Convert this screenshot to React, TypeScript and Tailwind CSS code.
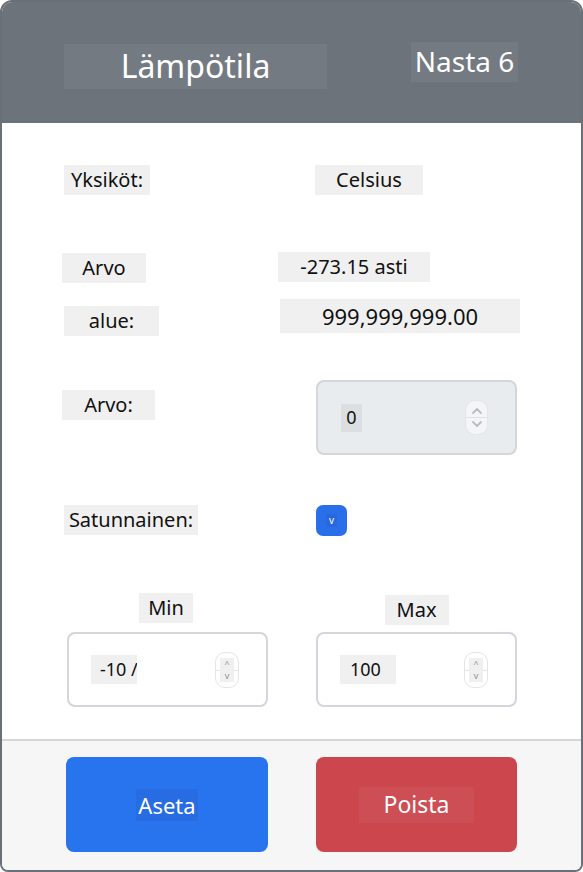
import React from "react";

const font = { fontFamily: '"Noto Sans", "Open Sans", sans-serif' };

function Spinner({ big }: { big?: boolean }) {
  if (big) {
    return (
      <div className="flex h-[35px] w-[23px] flex-col items-center justify-center rounded-[10px] border border-[#e3e5e8] bg-[#f4f5f6]">
        <svg width="14" height="10" viewBox="0 0 14 10" className="mb-[1px]">
          <path d="M3 7 L7 3 L11 7" stroke="#b9bdc2" strokeWidth="1.8" fill="none" strokeLinecap="round" strokeLinejoin="round" />
        </svg>
        <div className="h-px w-full bg-[#dfe1e4]" />
        <svg width="14" height="10" viewBox="0 0 14 10" className="mt-[1px]">
          <path d="M3 3 L7 7 L11 3" stroke="#b9bdc2" strokeWidth="1.8" fill="none" strokeLinecap="round" strokeLinejoin="round" />
        </svg>
      </div>
    );
  }
  return (
    <div className="relative flex h-[36px] w-[24px] flex-col items-center justify-center rounded-[10px] border border-[#e3e5e8] bg-white">
      <div className="absolute left-[-1px] right-[-1px] top-[17px] h-px bg-[#e3e5e8]" />
      <div className="relative flex w-[14px] flex-col items-center bg-[#f0f0f0] text-[9px] text-[#8a8f95]">
        <span className="block h-[12px] leading-[12px]">^</span>
        <span className="block h-[12px] leading-[12px]">v</span>
      </div>
    </div>
  );
}

function Label({ children, w, className = "" }: { children: React.ReactNode; w: string; className?: string }) {
  return (
    <div className={`flex h-[30px] items-center justify-center bg-[#f0f0f0] text-[20px] text-[#111] ${w} ${className}`}>
      {children}
    </div>
  );
}

export default function App() {
  return (
    <div style={font} className="h-[872px] w-[583px] bg-white">
      <div className="flex h-[872px] w-[583px] flex-col overflow-hidden rounded-t-[12px] rounded-b-[8px] border-2 border-[#6a7078]">
        {/* Header */}
        <div className="flex h-[121px] shrink-0 items-start bg-[#6c737b]">
          <div className="ml-[62px] mt-[42px] flex h-[45px] w-[263px] items-center justify-center bg-[#737a82] text-[32px] leading-none text-white">
            <span className="mt-[-2px]">Lämpötila</span>
          </div>
          <div className="ml-[84px] mt-[40px] flex h-[40px] w-[107px] items-center justify-center bg-[#737a82] text-[28px] leading-none text-white">
            <span className="mt-[-2px]">Nasta 6</span>
          </div>
        </div>

        {/* Body */}
        <div className="flex flex-1 flex-col pl-[62px]">
          {/* Row 1 */}
          <div className="mt-[42px] flex h-[30px] items-start">
            <div className="w-[251px]">
              <Label w="w-[86px]">Yksiköt:</Label>
            </div>
            <Label w="w-[108px]">Celsius</Label>
          </div>

          {/* Row 2 */}
          <div className="mt-[57px] flex h-[31px] items-start">
            <div className="w-[214px]">
              <Label w="w-[84px]" className="mt-[1px] -ml-[2px]">Arvo</Label>
            </div>
            <Label w="w-[152px]">-273.15 asti</Label>
          </div>

          {/* Row 3 */}
          <div className="mt-[16px] flex h-[37px] items-start">
            <div className="w-[216px]">
              <Label w="w-[95px]" className="mt-[7px]">alue:</Label>
            </div>
            <div className="flex h-[34px] w-[240px] items-center justify-center bg-[#f0f0f0] text-[22px] text-[#111]">
              999,999,999.00
            </div>
          </div>

          {/* Row 4 */}
          <div className="mt-[44px] flex h-[75px] items-start">
            <div className="w-[252px]">
              <Label w="w-[93px]" className="mt-[10px] -ml-[2px]">Arvo:</Label>
            </div>
            <div className="flex h-[75px] w-[201px] items-center rounded-[8px] border-2 border-[#d3d6da] bg-[#e9ecef] pl-[23px] pr-[27px]">
              <div className="flex h-[28px] w-[21px] items-center justify-center bg-[#dcdfe2] text-[18px] text-[#111]">0</div>
              <div className="flex-1" />
              <Spinner big />
            </div>
          </div>

          {/* Row 5 */}
          <div className="mt-[50px] flex h-[31px] items-start">
            <div className="w-[252px]">
              <Label w="w-[134px]">Satunnainen:</Label>
            </div>
            <div className="flex h-[31px] w-[31px] items-center justify-center rounded-[7px] bg-[#2a6fea]">
              <span className="bg-[#2868dc] px-[3px] text-[10px] leading-[13px] text-white">v</span>
            </div>
          </div>

          {/* Row 6 */}
          <div className="mt-[57px] flex h-[30px] items-start">
            <div className="w-[252px]">
              <div className="flex w-[204px] justify-center">
                <Label w="w-[54px]" className="h-[29px]">Min</Label>
              </div>
            </div>
            <div className="flex w-[201px] justify-center">
              <Label w="w-[64px]" className="mt-[2px] h-[28px]">Max</Label>
            </div>
          </div>

          {/* Row 7 */}
          <div className="mt-[9px] flex h-[75px] items-start">
            <div className="w-[252px]">
              <div className="ml-[3px] flex h-[75px] w-[201px] items-center rounded-[8px] border-2 border-[#d3d6da] bg-white pl-[22px] pr-[27px]">
                <div className="flex h-[29px] w-[46px] items-center overflow-hidden whitespace-nowrap bg-[#f0f0f0] pl-[9px] text-[18px] text-[#111]">
                  -10 /
                </div>
                <div className="flex-1" />
                <Spinner />
              </div>
            </div>
            <div className="flex h-[75px] w-[201px] items-center rounded-[8px] border-2 border-[#d3d6da] bg-white pl-[22px] pr-[27px]">
              <div className="flex h-[29px] w-[56px] items-center bg-[#f0f0f0] pl-[10px] text-[18px] text-[#111]">100</div>
              <div className="flex-1" />
              <Spinner />
            </div>
          </div>
        </div>

        {/* Footer */}
        <div className="flex h-[131px] shrink-0 items-start border-t-[2px] border-[#d6d6d6] bg-[#f6f6f6] pl-[64px] pt-[16px]">
          <div className="flex h-[95px] w-[202px] items-center justify-center rounded-[8px] bg-[#2873ee]">
            <span className="bg-[#276ce2] px-[2px] text-[22px] leading-[32px] text-white">Aseta</span>
          </div>
          <div className="ml-[48px] flex h-[95px] w-[201px] items-center justify-center rounded-[8px] bg-[#cc464d]">
            <span className="flex h-[36px] w-[115px] items-center justify-center bg-[#cd4e55] text-[23px] text-white">Poista</span>
          </div>
        </div>
      </div>
    </div>
  );
}
